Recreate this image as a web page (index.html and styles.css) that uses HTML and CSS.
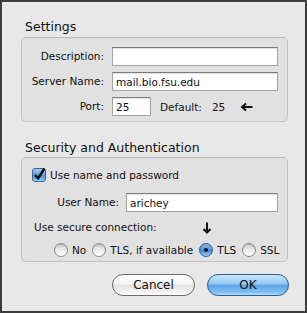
FILE: index.html
```html
<!DOCTYPE html>
<html>
<head>
<meta charset="utf-8">
<title>Account Settings</title>
<link rel="stylesheet" href="styles.css">
</head>
<body>
<div class="window">
  <div class="group-title">Settings</div>
  <div class="group settings">
    <label class="lbl">Description:</label>
    <input class="field" type="text" value="">
    <label class="lbl">Server Name:</label>
    <input class="field" type="text" value="mail.bio.fsu.edu">
    <label class="lbl">Port:</label>
    <div class="port-line">
      <input class="field port" type="text" value="25">
      <span class="default">Default:</span>
      <span class="default-val">25</span>
      <svg class="left-arrow" width="13" height="10" viewBox="0 0 13 10"><path d="M12.5 5H2.5M6 1.5L2 5L6 8.5" fill="none" stroke="#111" stroke-width="2"/></svg>
    </div>
  </div>

  <div class="group-title second">Security and Authentication</div>
  <div class="group security">
    <div class="check-row">
      <svg class="checkbox" width="14" height="14" viewBox="0 0 14 14">
        <defs>
          <linearGradient id="cbg" x1="0" y1="0" x2="0" y2="1">
            <stop offset="0" stop-color="#a9d2f6"/>
            <stop offset="0.5" stop-color="#5d9fe2"/>
            <stop offset="0.55" stop-color="#4b90dc"/>
            <stop offset="1" stop-color="#9ad4fb"/>
          </linearGradient>
        </defs>
        <rect x="0.5" y="0.5" width="13" height="13" rx="2.5" fill="url(#cbg)" stroke="#35669e"/>
        <path d="M3 7L6 10.5L12.5 0.5" fill="none" stroke="#0d0d0d" stroke-width="2.4" stroke-linejoin="round"/>
      </svg>
      <span>Use name and password</span>
    </div>
    <div class="user-row">
      <label class="lbl user-lbl">User Name:</label>
      <input class="field user" type="text" value="arichey">
    </div>
    <div class="secure-row">
      <span>Use secure connection:</span>
      <svg class="down-arrow" width="10" height="12" viewBox="0 0 10 12"><path d="M5 0.5V10.5M1.5 7L5 10.5L8.5 7" fill="none" stroke="#111" stroke-width="2"/></svg>
    </div>
    <div class="radio-row">
      <div class="radio-item"><span class="radio"></span><span>No</span></div>
      <div class="radio-item"><span class="radio"></span><span>TLS, if available</span></div>
      <div class="radio-item"><span class="radio on"></span><span>TLS</span></div>
      <div class="radio-item"><span class="radio"></span><span>SSL</span></div>
    </div>
  </div>

  <div class="buttons">
    <button class="btn cancel" type="button">Cancel</button>
    <button class="btn ok" type="button">OK</button>
  </div>
</div>
</body>
</html>
```
FILE: styles.css
```css
* { box-sizing: border-box; }

body {
  margin: 0;
  font-family: "DejaVu Sans", "Liberation Sans", sans-serif;
  font-size: 10.5px;
  color: #111;
}

.window {
  width: 307px;
  height: 313px;
  border: 2px solid #3d3d3d;
  background: #e8e8e8;
  padding: 17px 17px 0 19px;
}

.group-title {
  font-size: 12.5px;
  line-height: 15px;
  padding-left: 4px;
  margin-bottom: 3px;
}

.group-title.second {
  margin-top: 18px;
  margin-bottom: 2px;
}

.group {
  border: 1px solid #c2c2c2;
  border-top-color: #b8b8b8;
  border-radius: 5px;
  background: #e1e1e1;
}

.settings {
  display: grid;
  grid-template-columns: 82px 166px;
  grid-auto-rows: 19px;
  column-gap: 8px;
  row-gap: 6px;
  align-items: center;
  padding: 9px 9px 5px 0;
}

.lbl {
  text-align: right;
  line-height: 15px;
}

.field {
  display: block;
  height: 19px;
  width: 100%;
  margin: 0;
  padding: 0 3px;
  border: 1px solid #a4a4a4;
  border-top-color: #7c7c7c;
  background: #fff;
  box-shadow: inset 0 1px 1px rgba(0, 0, 0, 0.12);
  font-family: inherit;
  font-size: 10.5px;
  color: #111;
  outline: none;
}

.port-line {
  display: flex;
  align-items: center;
}

.port {
  width: 39px;
  flex: none;
}

.default { margin-left: 9px; }
.default-val { margin-left: 10px; }
.left-arrow { margin-left: 15px; flex: none; }

.security {
  padding: 10px 9px 4px 0;
}

.check-row {
  display: flex;
  align-items: center;
  gap: 4px;
  height: 14px;
  padding-left: 10px;
}

.checkbox { flex: none; overflow: visible; }

.user-row {
  display: flex;
  align-items: center;
  margin-top: 11px;
}

.user-lbl {
  width: 97px;
  flex: none;
}

.field.user {
  width: 152px;
  margin-left: 7px;
}

.secure-row {
  display: flex;
  align-items: center;
  margin-top: 8px;
  height: 15px;
  line-height: 15px;
  padding-left: 12px;
}

.down-arrow {
  margin-left: 45px;
  flex: none;
}

.radio-row {
  display: flex;
  align-items: center;
  height: 14px;
  margin-top: 8px;
  padding-left: 32px;
  white-space: nowrap;
}

.radio-item {
  display: flex;
  align-items: center;
  flex: none;
  gap: 4px;
  margin-right: 6px;
}

.radio {
  display: grid;
  place-items: center;
  width: 14px;
  height: 14px;
  flex: none;
  border-radius: 50%;
  border: 1px solid #8a8a8a;
  background: linear-gradient(#cfcfcf, #eeeeee 55%, #ffffff);
  box-shadow: inset 0 1px 1px rgba(0, 0, 0, 0.15);
}

.radio.on {
  border-color: #2f5f98;
  background: linear-gradient(#8cc0ee, #4f94dd 50%, #3f88d8 55%, #95d2fb);
}

.radio.on::after {
  content: "";
  width: 4px;
  height: 4px;
  border-radius: 50%;
  background: #111;
}

.buttons {
  display: flex;
  justify-content: flex-end;
  gap: 12px;
  margin-top: 12px;
  margin-right: -1px;
}

.btn {
  height: 22px;
  margin: 0;
  padding: 0;
  border-radius: 11px;
  font-family: "DejaVu Sans", "Liberation Sans", sans-serif;
  font-size: 12px;
  line-height: 20px;
  color: #111;
  text-align: center;
}

.cancel {
  width: 83px;
  border: 1px solid #6c6c6c;
  background: linear-gradient(#ffffff, #f4f4f4 45%, #e4e4e4 52%, #f2f2f2 85%, #ffffff);
}

.ok {
  width: 82px;
  border: 1px solid #2c5c93;
  background: linear-gradient(#cbe5fb, #92c6f1 45%, #5ea5e8 52%, #7dbdf2 85%, #b7e1fd);
}
```
